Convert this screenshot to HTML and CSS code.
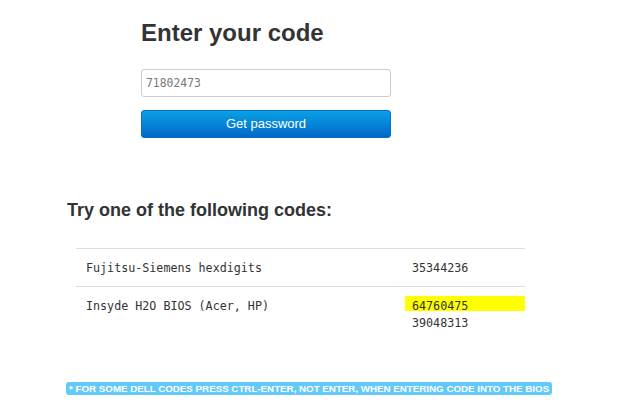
FILE: index.html
```html
<!DOCTYPE html>
<html>
<head>
<meta charset="utf-8">
<link rel="stylesheet" href="styles.css">
</head>
<body>
<div class="form">
  <h1 class="title">Enter your code</h1>
  <div class="input">71802473</div>
  <div class="btn">Get password</div>
</div>
<h2 class="subtitle">Try one of the following codes:</h2>
<div class="codes">
  <div class="row">
    <div class="name">Fujitsu-Siemens hexdigits</div>
    <div class="vals"><div class="val">35344236</div></div>
  </div>
  <div class="row">
    <div class="name">Insyde H2O BIOS (Acer, HP)</div>
    <div class="vals vals-top"><div class="val hl">64760475</div><div class="val next">39048313</div></div>
  </div>
</div>
<div class="note"><span class="label">* For some Dell codes press Ctrl-Enter, not Enter, when entering code into the BIOS</span></div>
</body>
</html>
```

FILE: styles.css
```css
html, body {
  margin: 0;
  padding: 0;
  background: #fff;
}
body {
  font-family: "Liberation Sans", Arial, sans-serif;
  color: #333;
  width: 636px;
  height: 408px;
  overflow: hidden;
}
.form {
  margin-left: 141px;
  width: 250px;
  padding-top: 19px;
}
.title {
  margin: 0;
  font-size: 24px;
  line-height: 28px;
  font-weight: bold;
  color: #333;
}
.input {
  margin-top: 22px;
  height: 28px;
  box-sizing: border-box;
  border: 1px solid #ccc;
  border-radius: 3px;
  padding: 0 4px;
  font-family: "DejaVu Sans Mono", monospace;
  font-size: 11.4px;
  line-height: 26px;
  color: #777;
}
.btn {
  margin-top: 13px;
  height: 28px;
  box-sizing: border-box;
  border: 1px solid #0a6cc4;
  border-radius: 3px;
  background: linear-gradient(to bottom, #0a9fe4 0%, #0585d8 50%, #0067c9 100%);
  color: #fff;
  font-size: 13px;
  line-height: 25px;
  text-align: center;
}
.subtitle {
  margin: 61px 0 0 67px;
  font-size: 18px;
  line-height: 22px;
  font-weight: bold;
  color: #333;
}
.codes {
  margin: 27px 0 0 76px;
  width: 449px;
  font-family: "DejaVu Sans Mono", monospace;
  font-size: 11.7px;
  line-height: 18px;
  color: #333;
}
.row {
  display: grid;
  grid-template-columns: 329px 1fr;
  border-top: 1px solid #ddd;
}
.name {
  padding: 10px 0 9px 10px;
}
.vals {
  padding: 10px 0 9px 0;
}
.vals-top {
  padding-top: 9px;
}
.val {
  padding-left: 7px;
}
.hl {
  background: #ffff00;
  height: 15px;
  box-sizing: border-box;
  padding-top: 1px;
}
.next {
  margin-top: 3px;
}
.note {
  margin: 41px 0 0 66px;
  line-height: 13px;
}
.label {
  display: inline-block;
  background: #62c9f9;
  color: #fff;
  border-radius: 3px;
  padding: 0 3px;
  font-size: 9.75px;
  line-height: 13px;
  height: 13px;
  font-weight: bold;
  text-transform: uppercase;
  vertical-align: top;
}
```
